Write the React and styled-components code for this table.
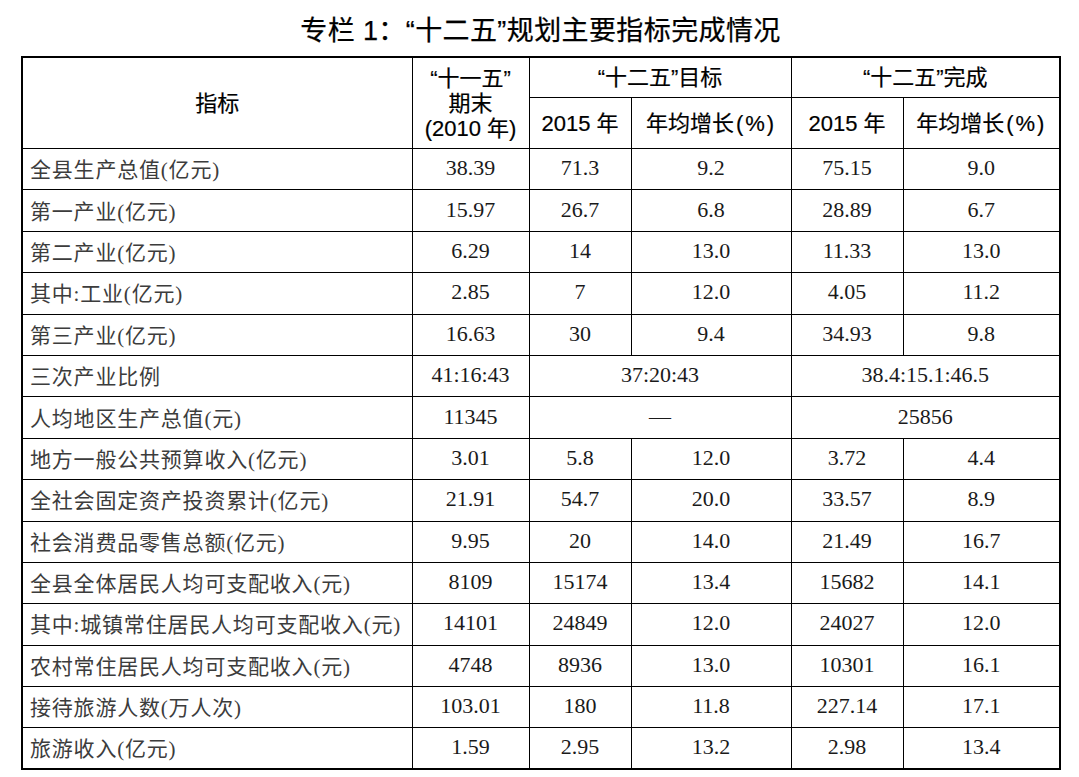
import React from "react";
import styled, { createGlobalStyle } from "styled-components";

const Global = createGlobalStyle`
  html, body { margin: 0; padding: 0; background: #fff; }
  body { font-family: "Noto Sans CJK SC", "Noto Sans", sans-serif; }
`;

const Page = styled.div`
  width: 1079px;
  height: 777px;
  overflow: hidden;
  padding-left: 21px;
  box-sizing: border-box;
`;

const Title = styled.h1`
  margin: 0;
  width: 1039px;
  padding-top: 7px;
  height: 49px;
  line-height: 48px;
  text-align: center;
  font-family: "Liberation Sans", "Noto Sans CJK SC", sans-serif;
  font-size: 27px;
  font-weight: 400;
  color: #000;
  -webkit-text-stroke: 0.25px #000;
  letter-spacing: 0.4px;
`;

const Table = styled.table`
  width: 1039px;
  table-layout: fixed;
  border-collapse: collapse;
  border: 2px solid #000;
`;

const HeadCell = styled.th`
  border: 1px solid #000;
  height: ${(p) => p.$h}px;
  padding: 0;
  text-align: center;
  vertical-align: middle;
  font-family: "Liberation Sans", "Noto Sans CJK SC", sans-serif;
  font-weight: 400;
  font-size: 22px;
  line-height: 25px;
  color: #000;
  -webkit-text-stroke: 0.2px #000;
`;

const Paren = styled.span`
  padding: 0 ${(p) => p.$pad}px;
`;

const Row = styled.tr`
  height: 41.4px;
`;

const Label = styled.td`
  border: 1px solid #000;
  padding: 0 0 2px 7px;
  text-align: left;
  vertical-align: middle;
  font-family: "Liberation Serif", "Noto Sans CJK SC", serif;
  font-size: 21px;
  color: #3c3c3c;
  white-space: nowrap;
  letter-spacing: 0.8px;
`;

const Num = styled.td`
  border: 1px solid #000;
  padding: 0 0 2px;
  text-align: center;
  vertical-align: middle;
  font-family: "Liberation Serif", serif;
  font-size: 22px;
  color: #1a1a1a;
`;

const cols = [390, 117, 102, 160, 112, 157];

const rows = [
  ["全县生产总值(亿元)", "38.39", "71.3", "9.2", "75.15", "9.0"],
  ["第一产业(亿元)", "15.97", "26.7", "6.8", "28.89", "6.7"],
  ["第二产业(亿元)", "6.29", "14", "13.0", "11.33", "13.0"],
  ["其中:工业(亿元)", "2.85", "7", "12.0", "4.05", "11.2"],
  ["第三产业(亿元)", "16.63", "30", "9.4", "34.93", "9.8"],
  ["三次产业比例", "41:16:43", { span: "37:20:43" }, null, { span: "38.4:15.1:46.5" }, null],
  ["人均地区生产总值(元)", "11345", { span: "—" }, null, { span: "25856" }, null],
  ["地方一般公共预算收入(亿元)", "3.01", "5.8", "12.0", "3.72", "4.4"],
  ["全社会固定资产投资累计(亿元)", "21.91", "54.7", "20.0", "33.57", "8.9"],
  ["社会消费品零售总额(亿元)", "9.95", "20", "14.0", "21.49", "16.7"],
  ["全县全体居民人均可支配收入(元)", "8109", "15174", "13.4", "15682", "14.1"],
  ["其中:城镇常住居民人均可支配收入(元)", "14101", "24849", "12.0", "24027", "12.0"],
  ["农村常住居民人均可支配收入(元)", "4748", "8936", "13.0", "10301", "16.1"],
  ["接待旅游人数(万人次)", "103.01", "180", "11.8", "227.14", "17.1"],
  ["旅游收入(亿元)", "1.59", "2.95", "13.2", "2.98", "13.4"],
];

const Growth = () => (
  <>
    年均增长<Paren $pad={2}>(</Paren>%<Paren $pad={2}>)</Paren>
  </>
);

export default function App() {
  return (
    <Page>
      <Global />
      <Title>专栏 1：“十二五”规划主要指标完成情况</Title>
      <Table>
        <colgroup>
          {cols.map((w, i) => (
            <col key={i} style={{ width: w }} />
          ))}
        </colgroup>
        <thead>
          <tr>
            <HeadCell rowSpan={2} $h={39}>指标</HeadCell>
            <HeadCell rowSpan={2} $h={39}>
              “十一五”
              <br />
              期末
              <br />
              (2010 年)
            </HeadCell>
            <HeadCell colSpan={2} $h={39}>“十二五”目标</HeadCell>
            <HeadCell colSpan={2} $h={39}>“十二五”完成</HeadCell>
          </tr>
          <tr>
            <HeadCell $h={50}>2015 年</HeadCell>
            <HeadCell $h={50}>
              <Growth />
            </HeadCell>
            <HeadCell $h={50}>2015 年</HeadCell>
            <HeadCell $h={50}>
              <Growth />
            </HeadCell>
          </tr>
        </thead>
        <tbody>
          {rows.map((r, i) => (
            <Row key={i}>
              <Label>{r[0]}</Label>
              {r.slice(1).map((c, j) => {
                if (c === null) return null;
                if (typeof c === "object")
                  return (
                    <Num key={j} colSpan={2}>
                      {c.span}
                    </Num>
                  );
                return <Num key={j}>{c}</Num>;
              })}
            </Row>
          ))}
        </tbody>
      </Table>
    </Page>
  );
}
